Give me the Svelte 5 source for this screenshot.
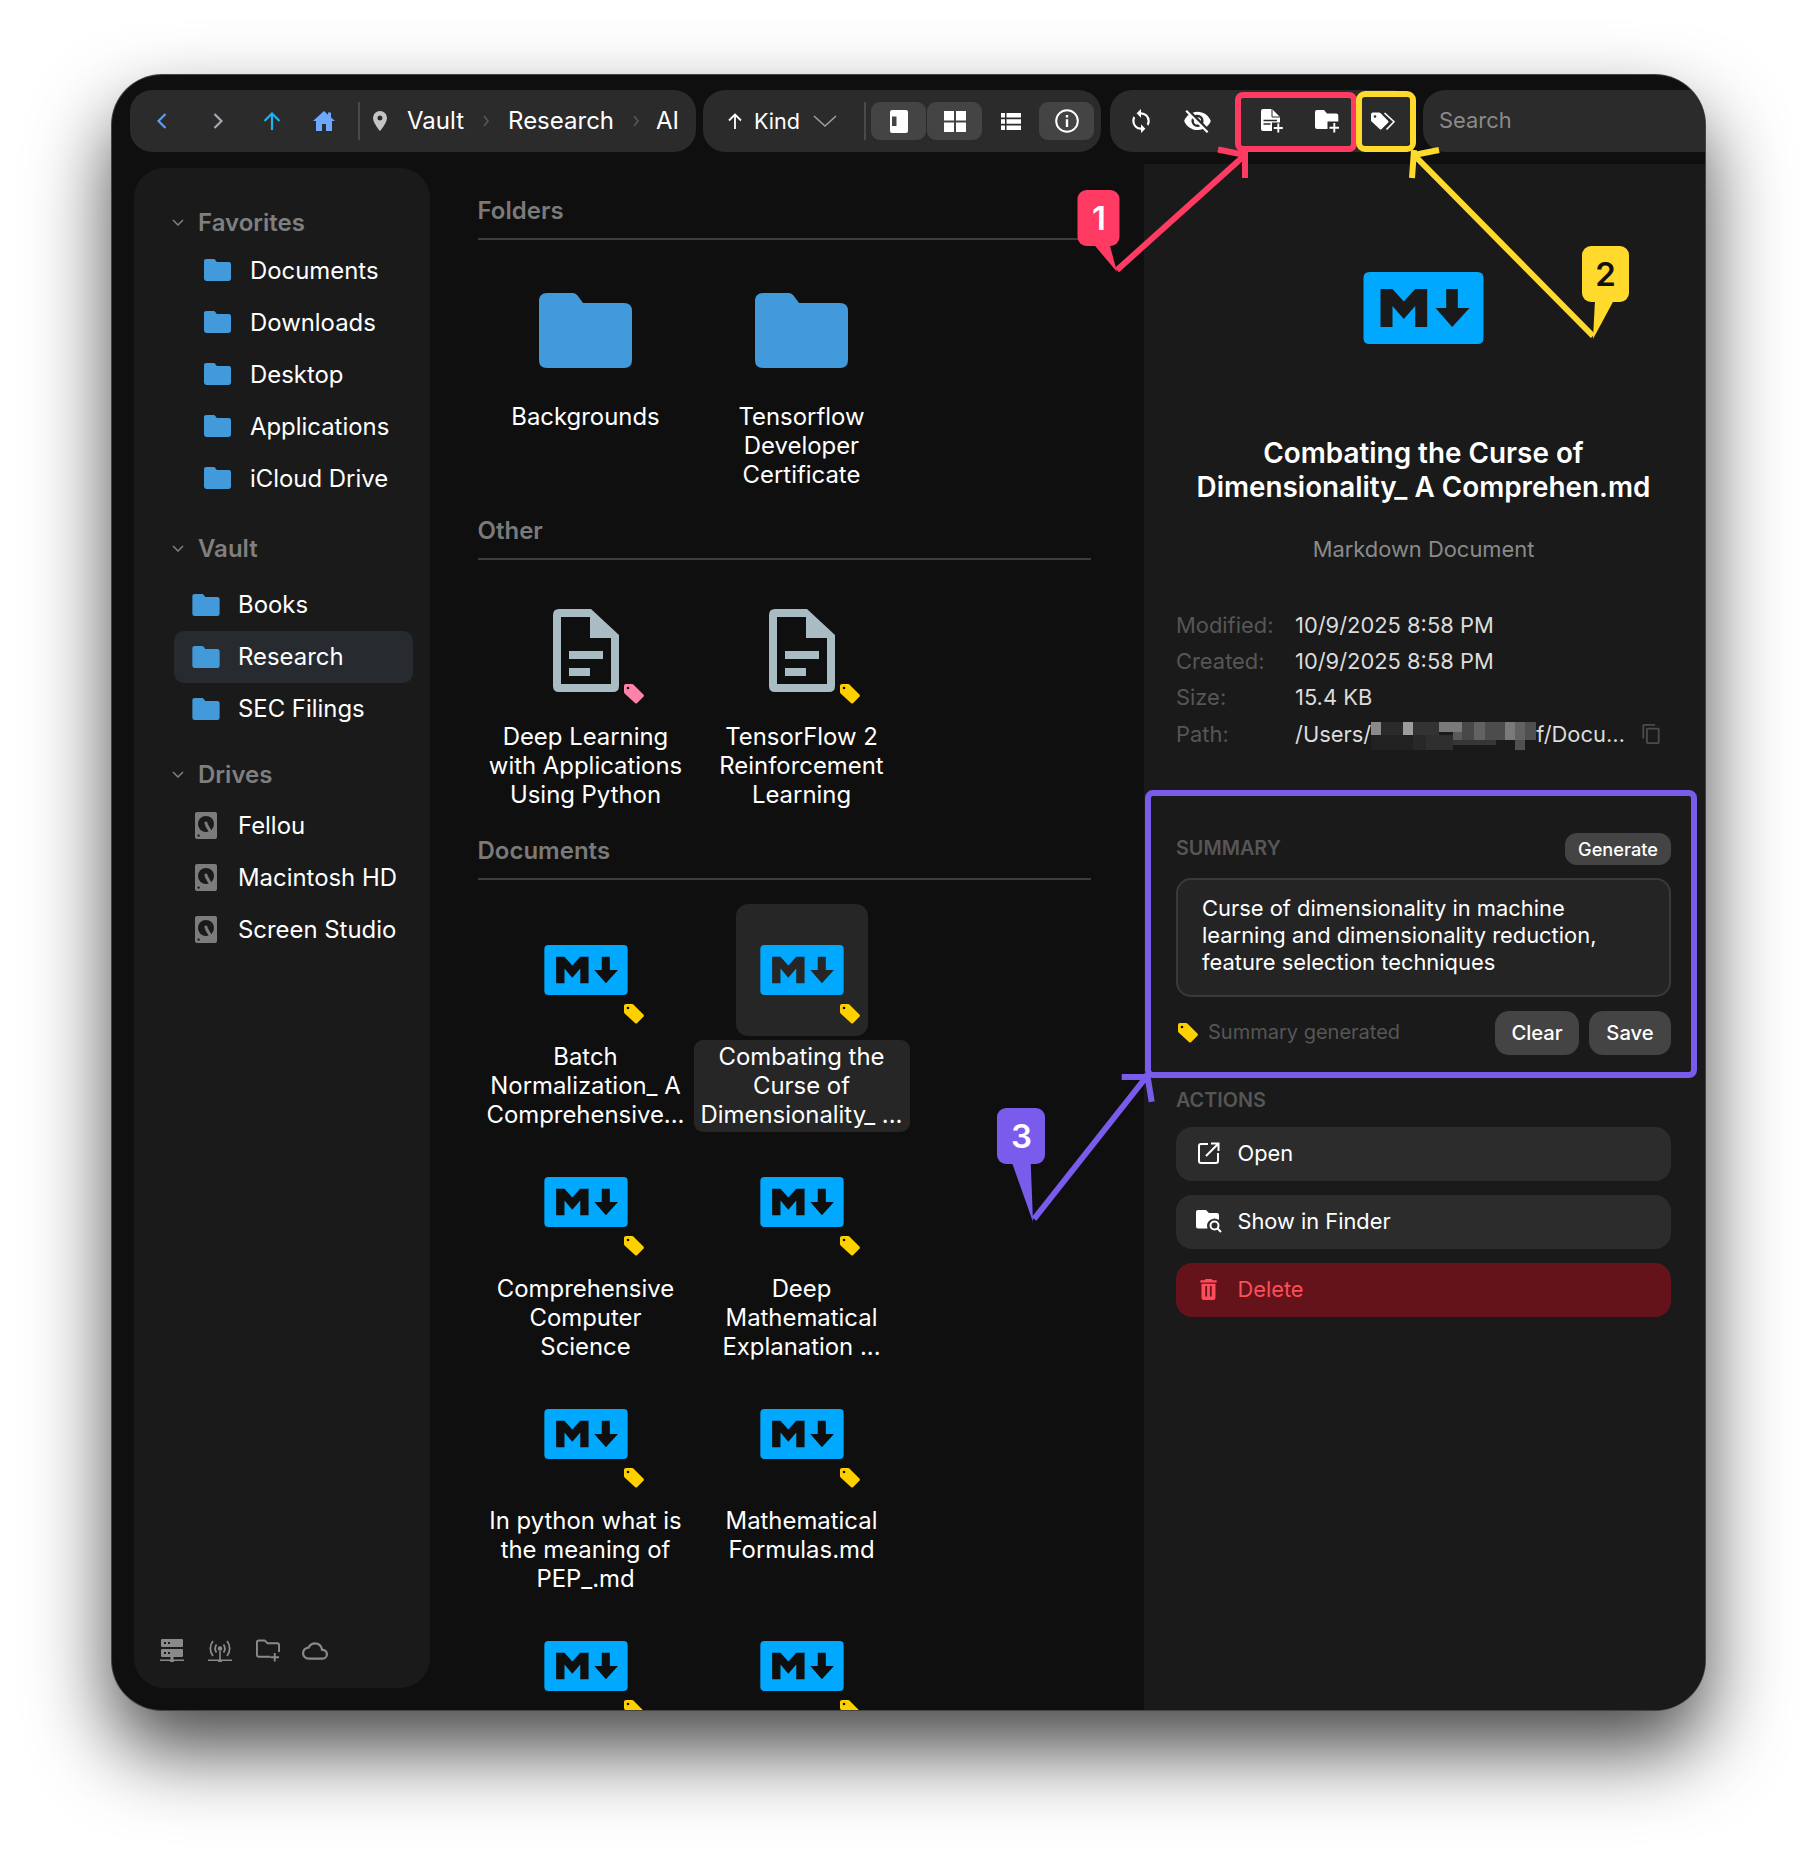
<script>
  const favorites = ['Documents', 'Downloads', 'Desktop', 'Applications', 'iCloud Drive'];
  const vault = ['Books', 'Research', 'SEC Filings'];
  const drives = ['Fellou', 'Macintosh HD', 'Screen Studio'];
  const folders = [['Backgrounds'], ['Tensorflow', 'Developer', 'Certificate']];
  const other = [
    { lines: ['Deep Learning', 'with Applications', 'Using Python'], tag: '#ff82a9' },
    { lines: ['TensorFlow 2', 'Reinforcement', 'Learning'], tag: '#ffd000' }
  ];
  const docs = [
    ['Batch', 'Normalization_ A', 'Comprehensive...'],
    ['Combating the', 'Curse of', 'Dimensionality_ ...'],
    ['Comprehensive', 'Computer', 'Science'],
    ['Deep', 'Mathematical', 'Explanation ...'],
    ['In python what is', 'the meaning of', 'PEP_.md'],
    ['Mathematical', 'Formulas.md'],
    [''],
    ['']
  ];
  const meta = [
    ['Modified:', '10/9/2025 8:58 PM'],
    ['Created:', '10/9/2025 8:58 PM'],
    ['Size:', '15.4 KB']
  ];
  const mosaic = [
    [0, 0, 10, 13, '#8a8a8a'], [10, 0, 22, 13, '#2a2a2a'], [32, 0, 10, 13, '#9c9c9c'], [42, 0, 26, 13, '#333333'],
    [68, 0, 23, 10, '#7a7a7a'], [82, 10, 9, 8, '#5a5a5a'], [91, 0, 12, 18, '#484848'], [103, 0, 11, 18, '#626262'],
    [114, 0, 20, 18, '#4c4c4c'], [134, 0, 10, 18, '#7a7a7a'], [144, 0, 10, 28, '#626262'], [154, 0, 11, 18, '#505050'],
    [0, 13, 42, 15, '#212121'], [42, 13, 13, 15, '#282828'], [55, 13, 27, 15, '#2f2f2f'], [82, 18, 43, 5, '#363636'],
    [144, 18, 10, 10, '#505050']
  ];
</script>

{#snippet folderIcon(cls)}
  <svg class={cls} viewBox="0 0 93 75"><path fill="#429ada" d="M0 8C0 3 3 0 8 0H34Q37 0 38.5 2.5L44 10H85Q93 10 93 18V67Q93 75 85 75H8Q0 75 0 67Z"/></svg>
{/snippet}

{#snippet md(cls)}
  <svg class={cls} viewBox="0 0 120 72"><path fill="#00a9ff" fill-rule="evenodd" d="M6 0H114Q120 0 120 6V66Q120 72 114 72H6Q0 72 0 66V6Q0 0 6 0ZM17 17V55H29V34L40.3 47L51.7 34V55H63.7V17H51.7L40.3 29.5L29 17ZM82.7 17V36H72L88.7 55L106 36H94.3V17Z"/></svg>
{/snippet}

{#snippet tag(color)}
  <svg class="tag" viewBox="0 0 20 20"><path fill={color} d="M0 2a2 2 0 0 1 2-2h6a2 2 0 0 1 1.4.6l10 10a1.6 1.6 0 0 1 0 2.2l-6.2 6.2a1.6 1.6 0 0 1-2.2 0L.6 9.4A2 2 0 0 1 0 8z"/><circle cx="4" cy="4" r="1.3" fill="#111"/></svg>
{/snippet}

{#snippet drive()}
  <svg class="ic-drive" viewBox="0 0 22 27">
    <rect width="22" height="27" rx="2" fill="#7c7c7c"/>
    <circle cx="11" cy="12" r="8" fill="#1a1a1a"/>
    <path d="M11 12l4.500 8" stroke="#7c7c7c" stroke-width="3"/>
    <circle cx="11" cy="11" r="1.600" fill="#7c7c7c"/>
    <circle cx="3.600" cy="23.600" r="1.200" fill="#1a1a1a"/>
  </svg>
{/snippet}

<div class="page">
  <div class="window">
    <header class="toolbar">
      <div class="group g1">
        <span class="slot s1"><svg class="i-chev" viewBox="0 0 10 16"><path d="M8.5 1L1.5 8l7 7" fill="none" stroke="#5b9ef5" stroke-width="2.2"/></svg></span>
        <span class="slot s2"><svg class="i-chev" viewBox="0 0 10 16"><path d="M1.5 1l7 7-7 7" fill="none" stroke="#a8a8b0" stroke-width="2.2"/></svg></span>
        <span class="slot s3"><svg class="i-up" viewBox="0 0 18 18"><path d="M9 18V2M1.5 9L9 1.5 16.5 9" fill="none" stroke="#19b4f2" stroke-width="2.2"/></svg></span>
        <span class="slot s4"><svg class="i-home" viewBox="0 0 22 20"><path fill="#6ea8fe" d="M11 0L0 10h3v10h6v-7h4v7h6V10h3l-4-3.6V1.500h-3v2.200z"/></svg></span>
        <span class="vdiv d1"></span>
        <svg class="i-pin" viewBox="0 0 14 20"><path fill="#c4c4c4" fill-rule="evenodd" d="M7 0a7 7 0 0 1 7 7c0 5-7 13-7 13S0 12 0 7a7 7 0 0 1 7-7zm0 4.500a2.500 2.500 0 1 0 0 5 2.500 2.500 0 0 0 0-5z"/></svg>
        <span class="crumb c-vault">Vault</span>
        <svg class="i-sep" viewBox="0 0 6 12"><path d="M1 1l4 5-4 5" fill="none" stroke="#5a5a5a" stroke-width="1.500"/></svg>
        <span class="crumb c-res">Research</span>
        <svg class="i-sep" viewBox="0 0 6 12"><path d="M1 1l4 5-4 5" fill="none" stroke="#5a5a5a" stroke-width="1.500"/></svg>
        <span class="crumb c-ai">AI</span>
      </div>

      <div class="group g2">
        <svg class="i-kind" viewBox="0 0 14 16"><path d="M7 16V2M1 7.500L7 1.500l6 6" fill="none" stroke="#fff" stroke-width="1.800"/></svg>
        <span class="crumb c-kind">Kind</span>
        <svg class="i-down" viewBox="0 0 24 12"><path d="M1 1l11 10L23 1" fill="none" stroke="#a0a0a0" stroke-width="1.500"/></svg>
        <span class="vdiv d2"></span>
        <span class="vbtn on first"><svg class="i-view" viewBox="0 0 18 23"><path fill="#fff" fill-rule="evenodd" d="M2 0h14a2 2 0 0 1 2 2v19a2 2 0 0 1-2 2H2a2 2 0 0 1-2-2V2a2 2 0 0 1 2-2zm0 6.500v9.500h4.500V6.500z"/></svg></span>
        <span class="vbtn on"><svg class="i-grid" viewBox="0 0 22 21"><path fill="#fff" d="M0 0h10v9.500H0zM12 0h10v9.500H12zM0 11.500h10V21H0zM12 11.500h10V21H12z"/></svg></span>
        <span class="vbtn"><svg class="i-list" viewBox="0 0 20 17"><path fill="#fff" d="M0 0h4v4.500H0zM5.500 0H20v4.500H5.500zM0 6.200h4v4.500H0zM5.500 6.200H20v4.500H5.500zM0 12.500h4V17H0zM5.500 12.500H20V17H5.500z"/></svg></span>
        <span class="vbtn on"><svg class="i-info" viewBox="0 0 24 24"><circle cx="12" cy="12" r="10.800" fill="none" stroke="#fff" stroke-width="2"/><path fill="#fff" d="M10.800 10.300h2.400V18h-2.400zM10.800 6h2.400v2.500h-2.400z"/></svg></span>
      </div>

      <div class="group g3">
        <span class="slot t1"><svg class="i-sync" viewBox="3 1 18 22"><path fill="#fff" d="M12,18A6,6 0 0,1 6,12C6,11 6.250,10.030 6.700,9.200L5.240,7.740C4.460,8.970 4,10.430 4,12A8,8 0 0,0 12,20V23L16,19L12,15M12,4V1L8,5L12,9V6A6,6 0 0,1 18,12C18,13 17.750,13.970 17.300,14.800L18.760,16.260C19.540,15.030 20,13.570 20,12A8,8 0 0,0 12,4Z"/></svg></span>
        <span class="slot t2"><svg class="i-hide" viewBox="1 3 22 19"><path fill="#fff" d="M11.830,9L15,12.160C15,12.110 15,12.050 15,12A3,3 0 0,0 12,9C11.940,9 11.890,9 11.830,9M7.530,9.800L9.080,11.350C9.030,11.560 9,11.770 9,12A3,3 0 0,0 12,15C12.220,15 12.440,14.970 12.650,14.920L14.200,16.470C13.530,16.800 12.790,17 12,17A5,5 0 0,1 7,12C7,11.210 7.200,10.470 7.530,9.800M2,4.270L4.280,6.550L4.730,7C3.080,8.300 1.780,10 1,12C2.730,16.390 7,19.500 12,19.500C13.550,19.500 15.030,19.200 16.380,18.660L16.810,19.080L19.730,22L21,20.730L3.270,3M12,7A5,5 0 0,1 17,12C17,12.640 16.870,13.260 16.640,13.820L19.570,16.750C21.070,15.500 22.270,13.860 23,12C21.270,7.610 17,4.500 12,4.500C10.600,4.500 9.260,4.750 8,5.200L10.170,7.350C10.740,7.130 11.350,7 12,7Z"/></svg></span>
        <span class="slot t3"><svg class="i-fplus" viewBox="0 0 23 24"><path fill="#fff" d="M2 0h9l8 8v5.500h-8V22H2a2 2 0 0 1-2-2V2a2 2 0 0 1 2-2z"/><path d="M11 0v8h8" fill="none" stroke="#2b2b2b" stroke-width="1"/><path d="M2.500 11.500h13.500M2.500 15h7" stroke="#2b2b2b" stroke-width="1.300"/><path d="M17.300 14.500v9M12.800 19h9" stroke="#fff" stroke-width="1.900"/></svg></span>
        <span class="slot t4"><svg class="i-dplus" viewBox="0 0 25 23"><path fill="#fff" d="M2 0h7l3 3.500h9.300a2 2 0 0 1 2 2v6H12.500V19H2a2 2 0 0 1-2-2V2a2 2 0 0 1 2-2z"/><path d="M19.300 13v9.500M14.500 17.700h9.500" stroke="#fff" stroke-width="1.900"/></svg></span>
        <span class="slot t5"><svg class="i-tags" viewBox="0 0 25 19"><path fill="#fff" d="M0 2.500A2 2 0 0 1 2 .500h6a2 2 0 0 1 1.400.6l7.600 7.600a1.500 1.500 0 0 1 0 2.100l-6.300 6.300a1.500 1.500 0 0 1-2.100 0L.6 9.500A2 2 0 0 1 0 8z"/><circle cx="4" cy="4.500" r="1.300" fill="#2b2b2b"/><path d="M13.500 1l9.500 8.700-7.500 7.800" fill="none" stroke="#fff" stroke-width="1.600"/></svg></span>
      </div>

      <div class="search">Search</div>
    </header>

    <div class="body">
      <aside class="sidebar">
        <section class="sb-sec fav">
          <h3 class="sb-head"><svg class="i-sbchev" viewBox="0 0 12 7"><path d="M1 1l5 5 5-5" fill="none" stroke="#808080" stroke-width="1.500"/></svg>Favorites</h3>
          {#each favorites as name}
            <div class="row">{@render folderIcon('ic-folder')}<span>{name}</span></div>
          {/each}
        </section>
        <section class="sb-sec vault">
          <h3 class="sb-head"><svg class="i-sbchev" viewBox="0 0 12 7"><path d="M1 1l5 5 5-5" fill="none" stroke="#808080" stroke-width="1.500"/></svg>Vault</h3>
          {#each vault as name}
            <div class="row" class:active={name === 'Research'}>{@render folderIcon('ic-folder')}<span>{name}</span></div>
          {/each}
        </section>
        <section class="sb-sec drives">
          <h3 class="sb-head"><svg class="i-sbchev" viewBox="0 0 12 7"><path d="M1 1l5 5 5-5" fill="none" stroke="#808080" stroke-width="1.500"/></svg>Drives</h3>
          {#each drives as name}
            <div class="row"><span class="dslot">{@render drive()}</span><span>{name}</span></div>
          {/each}
        </section>
        <footer class="sb-foot">
          <svg class="f-ic" viewBox="0 0 24 23"><path fill="#8a8a8a" fill-rule="evenodd" d="M2 0h20a1 1 0 0 1 1 1v6a1 1 0 0 1-1 1H2a1 1 0 0 1-1-1V1a1 1 0 0 1 1-1zm2 3v2h2V3zm4 0v2h2V3zM2 10h20a1 1 0 0 1 1 1v6a1 1 0 0 1-1 1H2a1 1 0 0 1-1-1v-6a1 1 0 0 1 1-1zm2 3v2h2v-2zm4 0v2h2v-2z"/><path fill="#8a8a8a" d="M10.500 18h3v2.500H24V22H14a2 2 0 0 1-4 0H0v-1.500h10.500z"/></svg>
          <svg class="f-ic" viewBox="0 0 24 23"><g fill="none" stroke="#8a8a8a" stroke-width="1.800"><path d="M5 2a12 12 0 0 0 0 15M19 2a12 12 0 0 1 0 15M8.500 5.500a7 7 0 0 0 0 8M15.500 5.500a7 7 0 0 1 0 8"/></g><circle cx="12" cy="9.500" r="2.300" fill="#8a8a8a"/><path fill="#8a8a8a" d="M11.200 12h1.600v8.500H24V22H14a2 2 0 0 1-4 0H0v-1.500h11.200z"/></svg>
          <svg class="f-ic" viewBox="0 0 25 23"><path fill="none" stroke="#8a8a8a" stroke-width="2" d="M15 18H3a2 2 0 0 1-2-2V3a2 2 0 0 1 2-2h6l3 3h10a2 2 0 0 1 2 2v7"/><path d="M19.500 14v9M15 18.500h9" stroke="#8a8a8a" stroke-width="2"/></svg>
          <svg class="f-cloud" viewBox="0 3 24 18"><path fill="#8a8a8a" d="M19.350,10.030C18.670,6.590 15.640,4 12,4C9.110,4 6.600,5.640 5.350,8.030C2.340,8.360 0,10.900 0,14A6,6 0 0,0 6,20H19A5,5 0 0,0 24,15C24,12.360 21.950,10.220 19.350,10.030M19,18H6A4,4 0 0,1 2,14C2,11.950 3.530,10.240 5.560,10.030L6.630,9.920L7.130,8.970C8.080,7.140 9.940,6 12,6C14.620,6 16.880,7.860 17.390,10.430L17.690,11.930L19.220,12.040C20.780,12.140 22,13.450 22,15A3,3 0 0,1 19,18Z"/></svg>
        </footer>
      </aside>

      <main class="main">
        <section class="sec">
          <h2 class="sec-head">Folders</h2>
          <div class="grid">
            {#each folders as lines}
              <div class="item">
                <div class="ibox">{@render folderIcon('big-folder')}</div>
                <div class="label">{#each lines as l}<span>{l}</span>{/each}</div>
              </div>
            {/each}
          </div>
        </section>
        <section class="sec">
          <h2 class="sec-head">Other</h2>
          <div class="grid">
            {#each other as o}
              <div class="item">
                <div class="ibox">
                  <svg class="big-file" viewBox="0 0 66 83"><path fill="#a9bcc4" fill-rule="evenodd" d="M6 0H38L66 26V77Q66 83 60 83H6Q0 83 0 77V6Q0 0 6 0ZM8 8V75H58V29H37V8Z"/><path fill="#a9bcc4" d="M16 42h34v8H16zM16 59h21v8H16z"/></svg>
                  {@render tag(o.tag)}
                </div>
                <div class="label">{#each o.lines as l}<span>{l}</span>{/each}</div>
              </div>
            {/each}
          </div>
        </section>
        <section class="sec">
          <h2 class="sec-head">Documents</h2>
          <div class="grid">
            {#each docs as lines, i}
              <div class="item" class:sel={i === 1}>
                <div class="ibox">
                  {@render md('md-sm')}
                  {@render tag('#ffd000')}
                </div>
                <div class="label">{#each lines as l}<span>{l}</span>{/each}</div>
              </div>
            {/each}
          </div>
        </section>
      </main>

      <aside class="panel">
        <div class="hero">{@render md('md-lg')}</div>
        <h1 class="title">Combating the Curse of<br />Dimensionality_ A Comprehen.md</h1>
        <p class="kind">Markdown Document</p>
        <div class="meta">
          {#each meta as m}
            <div class="mrow"><span class="ml">{m[0]}</span><span class="mv">{m[1]}</span></div>
          {/each}
          <div class="mrow">
            <span class="ml">Path:</span>
            <span class="mv path">/Users/<svg class="mosaic" viewBox="0 0 165 28">{#each mosaic as r}<rect x={r[0]} y={r[1]} width={r[2]} height={r[3]} fill={r[4]} />{/each}</svg>f/Docu…</span>
            <svg class="i-copy" viewBox="2 1 19 22"><path fill="#4c4c4c" d="M19,21H8V7H19M19,5H8A2,2 0 0,0 6,7V21A2,2 0 0,0 8,23H19A2,2 0 0,0 21,21V7A2,2 0 0,0 19,5M16,1H4A2,2 0 0,0 2,3V17H4V3H16V1Z"/></svg>
          </div>
        </div>

        <section class="summary">
          <div class="shead"><span class="cap">SUMMARY</span><span class="gen">Generate</span></div>
          <div class="sbox">Curse of dimensionality in machine<br />learning and dimensionality reduction,<br />feature selection techniques</div>
          <div class="sfoot">
            {@render tag('#ffd000')}
            <span class="sgen">Summary generated</span>
            <span class="sbtn clear">Clear</span>
            <span class="sbtn save">Save</span>
          </div>
        </section>

        <section class="actions">
          <div class="cap">ACTIONS</div>
          <div class="act"><span class="aslot"><svg class="i-open" viewBox="0 0 22 22"><path fill="none" stroke="#fff" stroke-width="2" d="M10 2H3a2 2 0 0 0-2 2v15a2 2 0 0 0 2 2h15a2 2 0 0 0 2-2v-8M8 14L20.500 1.500M13 1.500h7.500V9"/></svg></span>Open</div>
          <div class="act"><span class="aslot"><svg class="i-find" viewBox="0 0 26 23"><path fill="#fff" d="M2 0h8l3 3h8a2 2 0 0 1 2 2v5a7.500 7.500 0 0 0-11.500 8.500H2a2 2 0 0 1-2-2V2a2 2 0 0 1 2-2z"/><circle cx="18.500" cy="15.500" r="4" fill="none" stroke="#fff" stroke-width="2"/><path d="M21.500 18.500L25 22" stroke="#fff" stroke-width="2"/></svg></span>Show in Finder</div>
          <div class="act del"><span class="aslot"><svg class="i-trash" viewBox="5 3 14 18"><path fill="#ff4d5a" d="M19,4H15.500L14.500,3H9.500L8.500,4H5V6H19M6,19A2,2 0 0,0 8,21H16A2,2 0 0,0 18,19V7H6V19Z"/><path d="M10 9v9M14 9v9" stroke="#65131a" stroke-width="1.500"/></svg></span>Delete</div>
        </section>
      </aside>
    </div>
  </div>

  <svg class="ann" viewBox="0 0 1818 1858">
    <g fill="none" stroke-width="6">
      <rect x="1238" y="95" width="116" height="54" rx="5" stroke="#ff3b63"/>
      <path d="M1117 270L1245 155M1218 149.500L1245 155M1245 150V178" stroke="#ff3b63"/>
      <rect x="1359" y="94" width="54" height="55" rx="6" stroke="#ffd92b"/>
      <path d="M1593 336L1414 155M1439 150L1414 155M1412 178L1414 150" stroke="#ffd92b"/>
      <rect x="1148" y="793" width="546" height="282" rx="5" stroke="#7a5ced"/>
      <path d="M1034 1219L1147 1076M1121.700 1077H1147M1151.700 1101.700L1147 1073" stroke="#7a5ced"/>
    </g>
    <rect x="1077.500" y="190" width="42" height="56" rx="9" fill="#ff3b63"/>
    <path d="M1093.500 244L1117 272L1109.500 244Z" fill="#ff3b63"/>
    <text x="1099" y="230" class="num w">1</text>
    <rect x="1582" y="246" width="47" height="56" rx="9" fill="#ffd92b"/>
    <path d="M1595 300L1593 339L1614 300Z" fill="#ffd92b"/>
    <text x="1605.500" y="286" class="num k">2</text>
    <rect x="997" y="1108" width="48" height="56" rx="9" fill="#7a5ced"/>
    <path d="M1011.700 1162L1033 1222L1030.700 1162Z" fill="#7a5ced"/>
    <text x="1021.500" y="1148" class="num w">3</text>
  </svg>
</div>

<style>
  :global(body) { margin: 0; background: #fff; }
  * { box-sizing: border-box; }
  .page {
    position: relative;
    height: 1858px;
    width: 1818px;
    padding: 75px 0 0 112px;
    background: #fff;
    overflow: hidden;
    font-family: Inter, "Noto Sans", sans-serif;
    color: #fff;
    font-size: 23.9px;
  }
  .window {
    width: 1593px;
    height: 1635px;
    background: #0f0f0f;
    border-radius: 50px;
    overflow: hidden;
    display: flex;
    flex-direction: column;
    box-shadow: 0 0 0 1px #444, 0 40px 80px rgba(0, 0, 0, 0.72);
  }
  svg { display: block; flex: none; }

  .toolbar { display: flex; padding: 15px 0 0 18px; height: 77px; flex: none; }
  .group { display: flex; align-items: center; height: 62px; background: #2b2b2b; border-radius: 22px; flex: none; }
  .g1 { width: 566px; padding-left: 8px; }
  .g2 { width: 398px; margin-left: 7px; padding-left: 25px; }
  .g3 { width: 304px; margin-left: 9px; padding-left: 3px; }
  .search {
    flex: 1;
    margin-left: 9px;
    height: 62px;
    background: #2b2b2b;
    border-radius: 22px 0 0 22px;
    color: #8a8a8a;
    padding: 0 0 2px 16px;
    display: flex;
    align-items: center;
    font-size: 21.9px;
  }
  .slot { display: flex; align-items: center; justify-content: center; flex: none; }
  .s1 { width: 47px; }
  .s2 { width: 55px; margin-left: 5px; }
  .s3 { width: 54px; }
  .s4 { width: 50px; }
  .i-chev { width: 10px; height: 16px; }
  .i-up { width: 18px; height: 18px; }
  .i-home { width: 22px; height: 20px; }
  .i-pin { width: 14px; height: 20px; margin-left: 13px; }
  .vdiv { width: 2px; height: 38px; background: #4a4a4a; flex: none; }
  .d1 { margin-left: 9px; }
  .crumb { font-size: 24px; white-space: nowrap; padding-bottom: 1px; }
  .c-vault { margin-left: 20px; }
  .i-sep { width: 6px; height: 12px; margin-left: 19px; }
  .c-res { margin-left: 19px; }
  .c-ai { margin-left: 17px; }
  .i-kind { width: 14px; height: 16px; }
  .c-kind { margin-left: 12px; width: 45px; flex: none; font-size: 21.6px; }
  .i-down { width: 24px; height: 12px; margin-left: 14px; }
  .d2 { margin-left: 27px; }
  .vbtn { width: 55px; height: 38px; border-radius: 9px; display: flex; align-items: center; justify-content: center; margin-left: 1px; flex: none; }
  .vbtn.first { margin-left: 5px; }
  .vbtn.on { background: #444; }
  .i-view { width: 18px; height: 23px; }
  .i-grid { width: 22px; height: 21px; }
  .i-list { width: 20px; height: 17px; }
  .i-info { width: 24px; height: 24px; }
  .t1, .t2, .t5 { width: 56px; }
  .t3 { width: 56px; margin-left: 19px; }
  .t4 { width: 55px; }
  .i-sync { width: 20px; height: 24px; }
  .i-hide { width: 27px; height: 23px; }
  .i-fplus { width: 23px; height: 24px; }
  .i-dplus { width: 25px; height: 23px; }
  .i-tags { width: 25px; height: 19px; }

  .body { flex: 1; display: flex; min-height: 0; }

  .sidebar {
    width: 296px;
    margin: 16px 0 22px 22px;
    background: #1a1a1a;
    border-radius: 30px;
    padding-top: 38px;
    display: flex;
    flex-direction: column;
    flex: none;
  }
  .sb-head {
    margin: 0;
    display: flex;
    align-items: center;
    height: 32px;
    padding-left: 38px;
    font-size: 24px;
    font-weight: 600;
    color: #7f7f7f;
  }
  .i-sbchev { width: 12px; height: 7px; margin-right: 14px; }
  .vault { margin-top: 28px; }
  .drives { margin-top: 23.5px; }
  .fav .sb-head { margin-bottom: 6px; }
  .vault .sb-head { margin-bottom: 14.5px; }
  .drives .sb-head { margin-bottom: 9px; }
  .row {
    display: flex;
    align-items: center;
    height: 52px;
    width: 239px;
    margin-left: 40px;
    padding-left: 18px;
    gap: 18px;
    border-radius: 10px;
    white-space: nowrap;
  }
  .fav .row { padding-left: 30px; gap: 19px; }
  .row.active { background: #272b2f; }
  .ic-folder { width: 27px; height: 22px; }
  .vault .ic-folder { width: 28px; }
  .dslot { width: 28px; display: flex; justify-content: center; flex: none; }
  .ic-drive { width: 22px; height: 27px; }
  .sb-foot { margin-top: auto; display: flex; align-items: center; gap: 24px; padding: 0 0 26px 26px; }
  .f-ic { width: 24px; height: 23px; }
  .f-cloud { width: 26px; height: 20px; margin-left: -2px; }

  .main { width: 714px; flex: none; padding: 44px 0 0 47.5px; overflow: hidden; }
  .sec { width: 613px; margin-bottom: 24px; }
  .sec-head {
    margin: 0 0 24px;
    height: 44px;
    border-bottom: 2px solid #3d3d3d;
    font-size: 24px;
    font-weight: 600;
    color: #7a7a7a;
    line-height: 29px;
  }
  .grid { display: grid; grid-template-columns: 216px 216px; row-gap: 4px; }
  .item { width: 216px; }
  .ibox {
    position: relative;
    width: 132px;
    height: 132px;
    margin: 0 auto 4px;
    border-radius: 12px;
    display: flex;
    align-items: center;
    justify-content: center;
  }
  .sel .ibox { background: #262626; }
  .label { height: 92px; padding-top: 3px; border-radius: 9px; text-align: center; line-height: 28.800px; white-space: nowrap; }
  .label span { display: block; }
  .sel .label { background: #262626; }
  .big-folder { width: 93px; height: 75px; }
  .big-file { width: 66px; height: 83px; }
  .md-sm { width: 84px; height: 50px; }
  .md-lg { width: 121px; height: 72px; }
  .tag { width: 20px; height: 20px; }
  .ibox .tag { position: absolute; left: 104px; top: 100px; }

  .panel { width: 561px; margin-top: 12px; background: #1a1a1a; padding: 108px 34px 0 32px; flex: none; }
  .hero { display: flex; justify-content: center; }
  .title { margin: 92px -28px 0 -28px; font-size: 27.85px; font-weight: 600; line-height: 34px; text-align: center; white-space: nowrap; }
  .kind { margin: 31px 0 0; text-align: center; color: #8a8a8a; font-size: 21.9px; line-height: 28px; }
  .meta { margin-top: 44px; font-size: 21.9px; }
  .mrow { display: flex; align-items: center; height: 36.2px; white-space: nowrap; }
  .ml { width: 119px; color: #565656; flex: none; }
  .mv { color: #dcdcdc; }
  .path { display: inline-flex; align-items: center; width: 347px; }
  .mosaic { width: 165px; height: 28px; margin-top: 4px; }
  .i-copy { width: 18px; height: 20px; }

  .summary { margin-top: 81.5px; }
  .shead { display: flex; align-items: center; justify-content: space-between; height: 32px; }
  .cap { font-size: 19.8px; font-weight: 600; color: #565656; }
  .shead .cap { padding-bottom: 2px; }
  .gen { width: 106px; height: 32px; border-radius: 12px; background: #444; font-size: 18.2px; font-weight: 500; display: flex; align-items: center; justify-content: center; padding-bottom: 1px; }
  .sbox {
    margin-top: 13px;
    height: 119px;
    border: 2px solid #3a3a3a;
    border-radius: 15px;
    background: #242424;
    padding: 15px 0 0 24px;
    font-size: 21.9px;
    line-height: 27px;
    white-space: nowrap;
  }
  .sfoot { margin-top: 14px; display: flex; align-items: center; height: 44px; }
  .sgen { margin-left: 10px; color: #565656; font-size: 20px; margin-right: auto; white-space: nowrap; padding-bottom: 2px; }
  .sfoot .tag { margin-left: 2px; }
  .sbtn { height: 44px; border-radius: 14px; background: #444; display: flex; align-items: center; justify-content: center; font-size: 20.2px; font-weight: 500; padding-bottom: 2px; }
  .clear { width: 84px; }
  .save { width: 82px; margin-left: 10px; }

  .actions { margin-top: 33px; }
  .actions .cap { height: 24px; line-height: 24px; margin-bottom: 15px; }
  .act { height: 54px; margin-bottom: 14px; border-radius: 16px; background: #2c2c2c; display: flex; align-items: center; font-size: 21.8px; padding-bottom: 2px; }
  .aslot { width: 61.500px; padding-left: 4px; display: flex; justify-content: center; flex: none; }
  .act.del { background: #65131a; color: #ff4d5a; }
  .i-open { width: 22px; height: 22px; }
  .i-find { width: 26px; height: 23px; }
  .i-trash { width: 19px; height: 21px; }

  .ann { position: absolute; left: 0; top: 0; width: 1818px; height: 1858px; pointer-events: none; }
  .num { font-family: Inter, sans-serif; font-size: 33px; font-weight: 600; text-anchor: middle; }
  .num.w { fill: #fff; }
  .num.k { fill: #111; }
</style>
